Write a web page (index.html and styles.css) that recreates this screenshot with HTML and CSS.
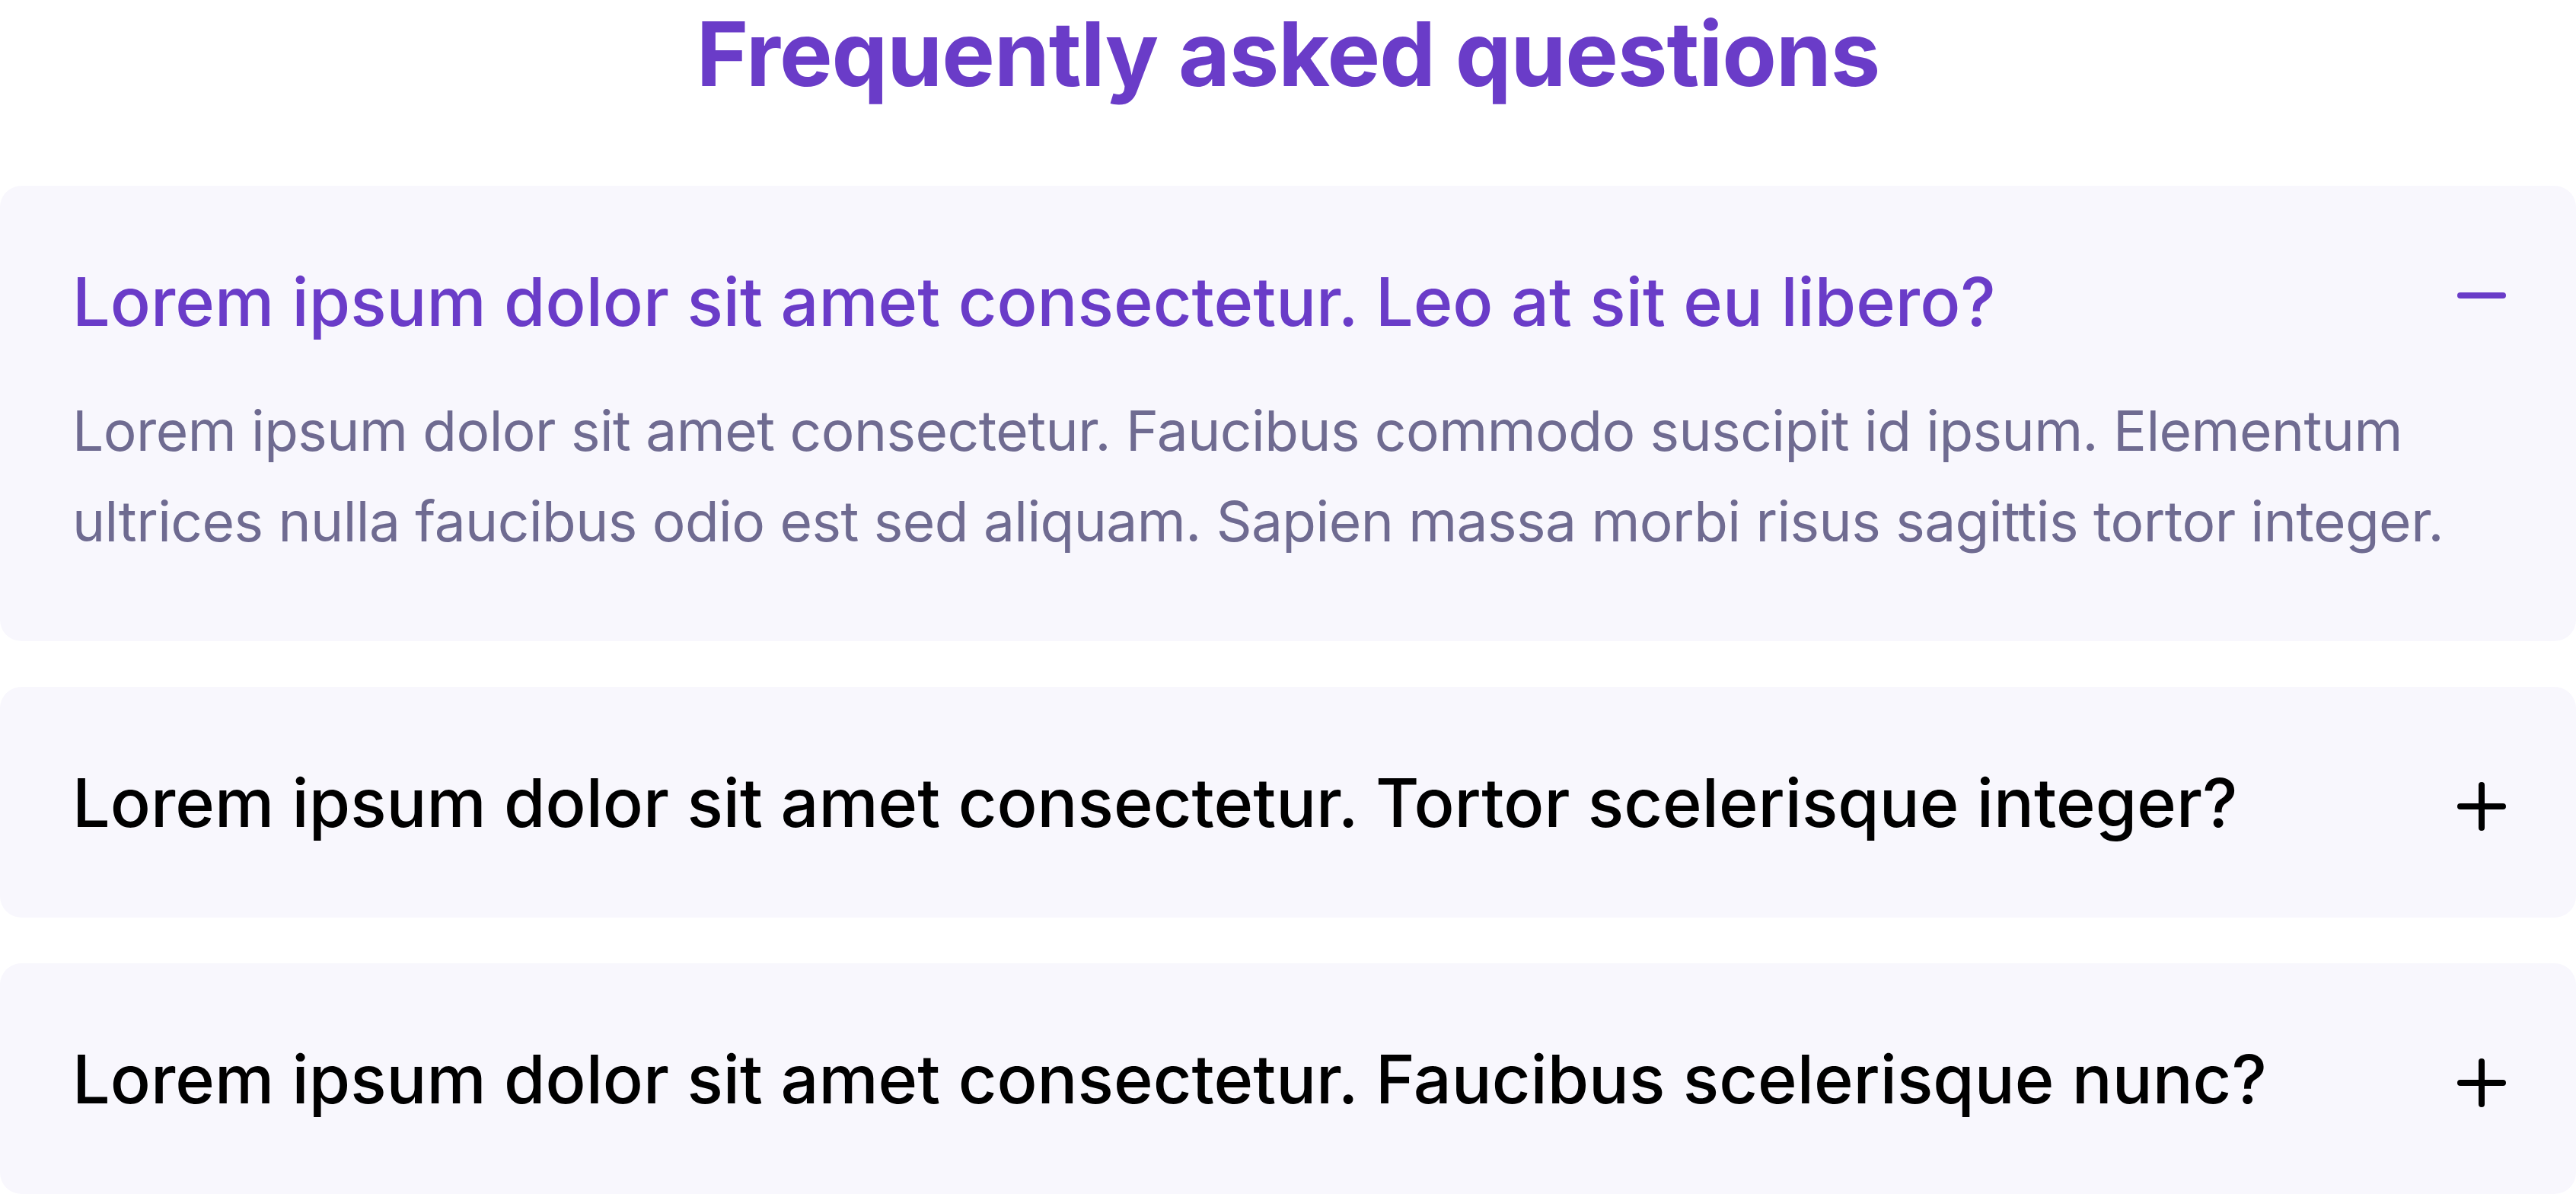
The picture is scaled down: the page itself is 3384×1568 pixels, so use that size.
FILE: index.html
```html
<!DOCTYPE html>
<html lang="en">
<head>
<meta charset="utf-8">
<title>FAQ</title>
<link rel="stylesheet" href="styles.css">
</head>
<body>
<section class="faq">
  <h1 class="faq-title">Frequently asked questions</h1>
  <div class="faq-list">
    <div class="faq-item is-open">
      <div class="faq-head">
        <h2 class="faq-q">Lorem ipsum dolor sit amet consectetur. Leo at sit eu libero?</h2>
        <svg class="faq-icon" width="64" height="80" viewBox="0 0 64 80" aria-hidden="true">
          <path d="M4 32 H60" stroke="currentColor" stroke-width="8" stroke-linecap="round" fill="none"/>
        </svg>
      </div>
      <p class="faq-a">Lorem ipsum dolor sit amet consectetur. Faucibus commodo suscipit id ipsum. Elementum ultrices nulla faucibus odio est sed aliquam. Sapien massa morbi risus sagittis tortor integer.</p>
    </div>
    <div class="faq-item">
      <div class="faq-head">
        <h2 class="faq-q">Lorem ipsum dolor sit amet consectetur. Tortor scelerisque integer?</h2>
        <svg class="faq-icon" width="64" height="80" viewBox="0 0 64 80" aria-hidden="true">
          <path d="M4 45 H60 M32 17 V73" stroke="currentColor" stroke-width="8" stroke-linecap="round" fill="none"/>
        </svg>
      </div>
    </div>
    <div class="faq-item">
      <div class="faq-head">
        <h2 class="faq-q">Lorem ipsum dolor sit amet consectetur. Faucibus scelerisque nunc?</h2>
        <svg class="faq-icon" width="64" height="80" viewBox="0 0 64 80" aria-hidden="true">
          <path d="M4 45 H60 M32 17 V73" stroke="currentColor" stroke-width="8" stroke-linecap="round" fill="none"/>
        </svg>
      </div>
    </div>
  </div>
</section>
</body>
</html>
```

FILE: styles.css
```css
html, body {
  margin: 0;
  padding: 0;
  background: #ffffff;
}

body {
  font-family: "Inter", "Liberation Sans", sans-serif;
  color: #000000;
}

.faq {
  display: flex;
  flex-direction: column;
}

.faq-title {
  margin: 0 0 102px;
  text-align: center;
  font-family: "Inter", "Liberation Sans", sans-serif;
  font-weight: 700;
  font-size: 117px;
  line-height: 142px;
  color: #6a3cc8;
  letter-spacing: -1px;
}

.faq-list {
  display: flex;
  flex-direction: column;
  gap: 60px;
}

.faq-item {
  background: #f8f7fd;
  border-radius: 28px;
  padding: 99px 92px 98px 95px;
}

.faq-head {
  display: flex;
  align-items: center;
  justify-content: space-between;
  gap: 40px;
}

.faq-q {
  margin: 0;
  font-size: 88px;
  font-weight: 500;
  line-height: 106px;
  color: #000000;
}

.is-open .faq-q,
.is-open .faq-icon {
  color: #6a3cc8;
}

.faq-icon {
  flex: none;
  color: #000000;
}

.faq-a {
  margin: 57px 0 0;
  font-size: 73px;
  font-weight: 400;
  line-height: 119px;
  letter-spacing: -0.55px;
  color: #6f6b91;
}
```
